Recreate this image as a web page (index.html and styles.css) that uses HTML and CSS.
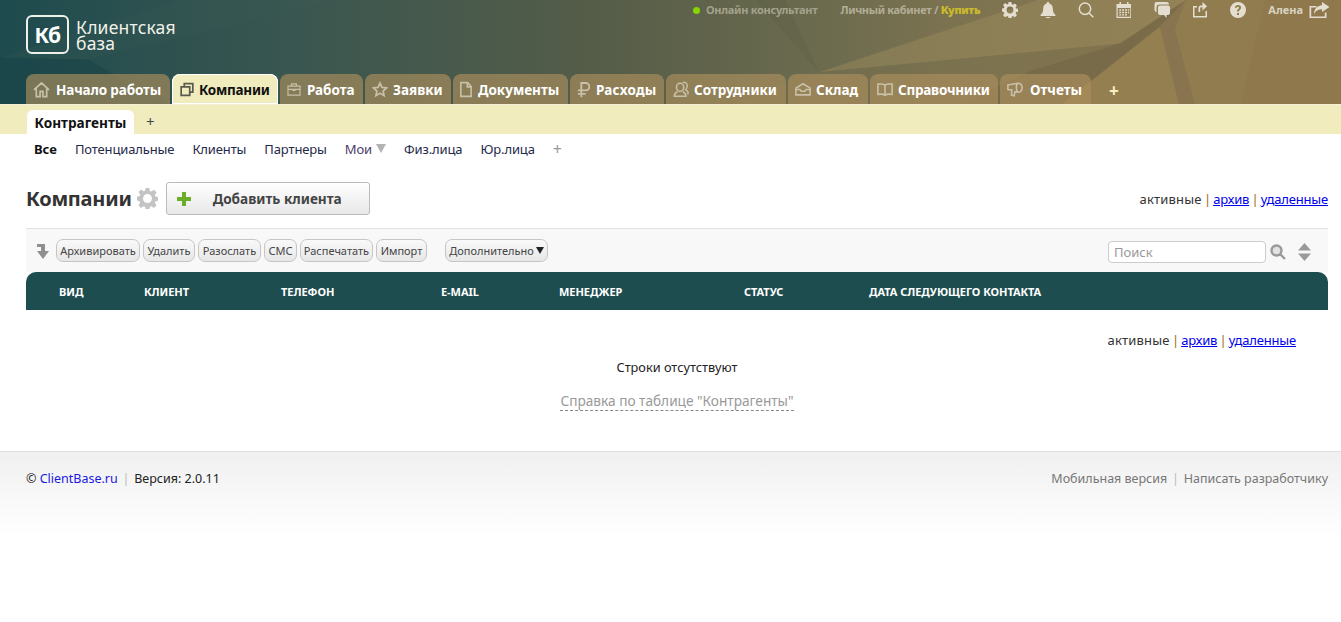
FILE: index.html
```html
<!DOCTYPE html>
<html lang="ru">
<head>
<meta charset="utf-8">
<title>Клиентская база</title>
<link rel="stylesheet" href="styles.css">
</head>
<body>
<svg class="sprite" width="0" height="0">
  <symbol id="i-gear" viewBox="0 0 16 16"><path fill-rule="evenodd" d="M6.600 0h2.800l.4 2.200 1.200.5 1.900-1.300 2 2-1.300 1.900.5 1.200 2.200.4v2.800l-2.200.4-.5 1.200 1.300 1.900-2 2-1.900-1.300-1.200.5-.4 2.200H6.600l-.4-2.200-1.200-.5-1.900 1.300-2-2 1.300-1.900-.5-1.200L-.3 9.400V6.600l2.200-.4.5-1.200-1.300-1.900 2-2L5 2.400l1.200-.5zM8 4.600a3.400 3.400 0 1 0 0 6.800 3.400 3.400 0 0 0 0-6.800z"/></symbol>
</svg>

<header class="top">
  <svg class="top-art" viewBox="0 0 1341 105" preserveAspectRatio="none" aria-hidden="true">
    <polygon points="0,58 88,60 135,88 170,105 0,105" fill="#184245" opacity=".5"/>
    <polygon points="88,60 340,0 180,0 0,58" fill="#3f6058" opacity=".18"/>
    <polygon points="756,0 819,73 785,0" fill="#4d4f3b" opacity=".14"/>
    <polygon points="819,73 1038,0 1186,0 1120,44" fill="#a3925f" opacity=".4"/>
    <polygon points="819,73 1120,44 930,105 730,105" fill="#7a6f50" opacity=".3"/>
    <polygon points="1186,0 1120,44 1030,72 960,105 1062,105 1160,27" fill="#6f6344" opacity=".55"/>
    <polygon points="1160,27 1179,105 1062,105" fill="#947f50"/>
    <polygon points="1186,0 1160,27 1179,105 1195,105 1175,30" fill="#887550"/>
    <polygon points="1186,0 1265,0 1241,105 1195,105 1175,30" fill="#917c50"/>
    <polygon points="1265,0 1341,0 1341,105 1241,105" fill="#8f794c"/>
  </svg>

  <div class="top-bar">
    <span class="online-dot"></span>
    <a class="top-link online">Онлайн консультант</a>
    <span class="top-link cabinet">Личный кабинет / <b class="buy">Купить</b></span>
    <div class="top-icons">
      <svg class="ti" viewBox="0 0 16 16"><use href="#i-gear"/></svg>
      <svg class="ti" viewBox="0 0 16 16"><path d="M8 0a1.300 1.300 0 0 1 1.300 1.500C11.600 2 12.800 4 12.800 6.500c0 3.500 1 4.700 2.700 6.500v1H.5v-1c1.700-1.800 2.700-3 2.700-6.500C3.200 4 4.400 2 6.700 1.500A1.300 1.300 0 0 1 8 0zM6 15h4a2 2 0 0 1-4 0z"/></svg>
      <svg class="ti" viewBox="0 0 16 16"><path fill="none" stroke="currentColor" stroke-width="1.500" d="M7 1a5.700 5.700 0 1 0 0 11.400A5.700 5.700 0 0 0 7 1zM11 11l4.300 4.300"/></svg>
      <svg class="ti" viewBox="0 0 16 16"><path fill-rule="evenodd" d="M3.500 0h1.500v2h6V0h1.500v2h2.500v14H.5V2h3zM1.700 6v8.800h12.600V6zM3.200 7.300h2v1.500h-2zm2.900 0h2v1.500h-2zm2.900 0h2v1.500H9zm2.900 0h1.200v1.500h-1.200zM3.200 9.800h2v1.500h-2zm2.900 0h2v1.500h-2zm2.900 0h2v1.500H9zm2.900 0h1.200v1.500h-1.200zM3.200 12.200h2v1.400h-2zm2.900 0h2v1.400h-2zm2.900 0h2v1.400H9z"/></svg>
      <svg class="ti" viewBox="0 0 16 16"><path d="M2.500 0h10A2.500 2.500 0 0 1 15 2.500h-9.500a3 3 0 0 0-3 3V10A2.200 2.200 0 0 1 .5 8V2a2 2 0 0 1 2-2zM6 3.500h8a2 2 0 0 1 2 2V11a2 2 0 0 1-2 2h-1.500v3L10 13H6a2 2 0 0 1-2-2V5.500a2 2 0 0 1 2-2z"/></svg>
      <svg class="ti" viewBox="0 0 16 16"><path d="M1 4h4v1.500H2.500v8.500h11V9H15v6.500H1zM6.500 10V6a2.500 2.500 0 0 1 2.500-2.500h1.500V0L15 4.200 10.500 8.400V5.200H9c-.5 0-.8.3-.8.8v4z"/></svg>
      <svg class="ti" viewBox="0 0 16 16"><path fill-rule="evenodd" d="M8 0a8 8 0 1 1 0 16A8 8 0 0 1 8 0zM7 11v2h2v-2zM8 3C6.200 3 5 4 4.900 5.800h2C7 5.100 7.300 4.800 8 4.800c.6 0 1 .3 1 .9 0 .5-.3.800-.9 1.300C7.300 7.600 7 8.200 7 9.500h2c0-.8.200-1.100.8-1.600.8-.6 1.300-1.200 1.300-2.300C11.100 4 9.800 3 8 3z"/></svg>
    </div>
    <span class="top-link user">Алена</span>
    <svg class="logout" viewBox="0 0 21 16"><path d="M.5 4h7v1.500H2.200v9h13.600v-4h1.700v5.500H.5zM13 0l7.500 5L13 10V7.200C9.500 7.200 6.800 8.500 5 12c0-5 3-8.300 8-8.800z"/></svg>
  </div>

  <div class="brand">
    <span class="brand-mark">Кб</span>
    <span class="brand-name">Клиентская<br>база</span>
  </div>

  <nav class="tabs">
    <a class="tab tab-start"><svg class="tab-i" viewBox="0 0 18 18"><path fill="none" stroke="currentColor" stroke-width="1.800" d="M1 9.500L9 2l8 7.500M3.500 8v8.500h4V11h3v5.500h4V8"/></svg>Начало работы</a>
    <a class="tab tab-active"><svg class="tab-i" viewBox="0 0 18 18"><path fill="none" stroke="currentColor" stroke-width="2.200" d="M5.500 4.500V1.500h11v11h-3.500M1.500 5.500h11v11h-11z"/></svg>Компании</a>
    <a class="tab tab-work"><svg class="tab-i" viewBox="0 0 18 18"><path fill="currentColor" fill-rule="evenodd" d="M6 1h6a1 1 0 0 1 1 1v2h4.500v13H.5V4H5V2a1 1 0 0 1 1-1zm.7 1.500V4h4.600V2.500zM2 5.500V8h14V5.500zM2 9.500V15.500h14V9.500h-5V11H7V9.500z"/></svg>Работа</a>
    <a class="tab tab-req"><svg class="tab-i" viewBox="0 0 18 18"><path fill="none" stroke="currentColor" stroke-width="1.900" d="M9 1.800l2.200 4.800 5.200.6-3.900 3.500 1.100 5.200L9 13.300l-4.600 2.600 1.100-5.200L1.600 7.200l5.200-.6z"/></svg>Заявки</a>
    <a class="tab tab-docs"><svg class="tab-i" viewBox="2 0 14 18"><path fill="none" stroke="currentColor" stroke-width="1.900" d="M3 1h8l4 4.500V17H3zM10.500 1v5H15"/></svg>Документы</a>
    <a class="tab tab-cost"><svg class="tab-i" viewBox="1 0 15 18"><path fill="none" stroke="currentColor" stroke-width="2.200" d="M6 18V1.500h5a4 4 0 0 1 0 8.500H2M2 14H11"/></svg>Расходы</a>
    <a class="tab tab-staff"><svg class="tab-i" viewBox="0 0 18 18"><path fill="none" stroke="currentColor" stroke-width="1.700" d="M8 2a4 4 0 0 1 4 4v1a4 4 0 0 1-8 0V6a4 4 0 0 1 4-4zM5 11.500C2.500 12.500 1.500 14 1.500 16.500h13c0-2.500-1-4-3.500-5M11 1.300a3.500 3.500 0 0 1 5 3.200c0 2-.5 3.500-1.800 4.500l2.600 2.500v3"/></svg>Сотрудники</a>
    <a class="tab tab-stock"><svg class="tab-i" viewBox="0 0 18 18"><path fill="none" stroke="currentColor" stroke-width="1.800" d="M1 7.500L9 2.500l8 5V15H1zM1 9h4.500l1.500 2h4l1.500-2H17"/></svg>Склад</a>
    <a class="tab tab-refs"><svg class="tab-i" viewBox="0 0 18 18"><path fill="none" stroke="currentColor" stroke-width="1.800" d="M9 4C7.500 2.800 4.500 2.500 1 3v11.500c3.500-.5 6.500-.2 8 1 1.500-1.200 4.500-1.500 8-1V3c-3.500-.5-6.500-.2-8 1zM9 4v11"/></svg>Справочники</a>
    <a class="tab tab-reports"><svg class="tab-i" viewBox="0 0 18 18"><path fill="none" stroke="currentColor" stroke-width="1.800" d="M1 4l11-2c3-.5 5 2 5 5s-2 5.500-5 5l-3-.5L8 16l-3-.6.5-5.900L1 9zM12 2c-2 2.500-2 7.500 0 10"/></svg>Отчеты</a>
    <span class="tab-add">+</span>
  </nav>
</header>

<div class="sub-band">
  <a class="sub-tab">Контрагенты</a>
  <span class="sub-add">+</span>
</div>

<nav class="filters">
  <a class="filter filter-on">Все</a>
  <a class="filter">Потенциальные</a>
  <a class="filter">Клиенты</a>
  <a class="filter">Партнеры</a>
  <a class="filter filter-my">Мои<i class="tri"></i></a>
  <a class="filter">Физ.лица</a>
  <a class="filter">Юр.лица</a>
  <span class="filter-add">+</span>
</nav>

<main class="main">
  <div class="title-row">
    <h1 class="title">Компании</h1>
    <svg class="title-gear" viewBox="0 0 16 16"><use href="#i-gear"/></svg>
    <button class="add-btn"><span class="add-plus"></span>Добавить клиента</button>
    <div class="states"><span>активные</span> <i>|</i> <a href="#">архив</a> <i>|</i> <a href="#">удаленные</a></div>
  </div>

  <div class="toolbar">
    <svg class="down-arrow" viewBox="0 0 12 15"><path d="M0 0h8v7h4l-6 8-6-8h4V3H0z"/></svg>
    <button class="tb tb-a">Архивировать</button>
    <button class="tb tb-b">Удалить</button>
    <button class="tb tb-c">Разослать</button>
    <button class="tb tb-d">СМС</button>
    <button class="tb tb-e">Распечатать</button>
    <button class="tb tb-f">Импорт</button>
    <button class="tb tb-more">Дополнительно<i class="tb-tri"></i></button>
    <input class="search" placeholder="Поиск">
    <svg class="search-i" viewBox="0 0 16 16"><path fill="#e2e2e2" stroke="#999" stroke-width="2.400" d="M6.500 1.500a5 5 0 1 0 0 10 5 5 0 0 0 0-10zM10 10l5 5"/></svg>
    <svg class="sort-i" viewBox="0 0 13 18"><path fill="#999" d="M6.500 0L13 7.500H0zM0 10.500h13L6.500 18z"/></svg>
  </div>

  <div class="thead">
    <span>ВИД</span><span>КЛИЕНТ</span><span>ТЕЛЕФОН</span><span>E-MAIL</span><span>МЕНЕДЖЕР</span><span>СТАТУС</span><span>ДАТА СЛЕДУЮЩЕГО КОНТАКТА</span>
  </div>

  <div class="states states-low"><span>активные</span> <i>|</i> <a href="#">архив</a> <i>|</i> <a href="#">удаленные</a></div>
  <p class="empty">Строки отсутствуют</p>
  <p class="help-row"><a class="help">Справка по таблице "Контрагенты"</a></p>
</main>

<footer class="foot">
  <div class="foot-left">© <a class="foot-brand">ClientBase.ru</a> <i>|</i> Версия: 2.0.11</div>
  <div class="foot-right"><a>Мобильная версия</a> <i>|</i> <a>Написать разработчику</a></div>
</footer>
</body>
</html>
```
FILE: styles.css
```css
* { box-sizing: border-box; }
html, body { margin: 0; padding: 0; background: #fff; }
body { font-family: "Noto Sans", "Open Sans", sans-serif; font-size: 13px; color: #222; overflow-x: hidden; }
.sprite { position: absolute; }
a { text-decoration: none; }

/* header */
.top { position: relative; height: 105px; border-bottom: 1px solid #f4f0d8; background: linear-gradient(90deg, #1e4b4e 0%, #3a5650 22%, #565d48 45%, #6a6a4e 60%, #7d7350 72%, #927c50 100%); overflow: hidden; }
.top-art { position: absolute; inset: 0; width: 100%; height: 100%; }
.top-bar { position: absolute; top: 0; right: 11px; height: 20px; display: flex; align-items: center; font-size: 11px; font-weight: 700; color: #b8b29b; }
.online-dot { width: 7px; height: 7px; border-radius: 50%; background: #86d400; margin-right: 6px; }
.top-link { white-space: nowrap; padding-bottom: 2px; }
.online { color: #a3a28c; margin-right: 23px; letter-spacing: -.27px; }
.cabinet { color: #b2ae96; margin-right: 22px; letter-spacing: -.35px; }
.buy { color: #c9b92d; }
.top-icons { display: flex; gap: 22px; color: #e4ded0; margin-right: 22px; }
.ti { width: 16px; height: 16px; fill: currentColor; display: block; }
.user { color: #d9d3c2; margin-right: 6px; }
.logout { width: 21px; height: 16px; fill: #e4ded0; }

.brand { position: absolute; left: 26px; top: 15px; display: flex; align-items: center; color: #fff; }
.brand-mark { width: 43px; height: 39px; border: 2px solid #eef0ea; border-radius: 6px; font-size: 21px; font-weight: 700; display: flex; align-items: center; justify-content: center; letter-spacing: -.5px; }
.brand-name { margin-left: 7px; font-size: 17.500px; line-height: 16px; color: #f2f2ea; letter-spacing: .2px; }

.tabs { position: absolute; left: 26px; bottom: 0; display: flex; gap: 2px; height: 30px; }
.tab { display: flex; align-items: center; height: 30px; padding: 1px 0 0 7px; border-radius: 8px 8px 0 0; background: rgba(172, 142, 92, .66); color: #fff; font-size: 13.500px; font-weight: 700; white-space: nowrap; }
.tab-i { width: 16px; height: 17px; margin-right: 5px; color: #c8c0a8; flex: none; }
.tab-start { width: 144px; letter-spacing: -.15px; }
.tab-start .tab-i { width: 17px; margin-right: 6px; }
.tab-active { width: 106px; padding-left: 8px; background: #f1ecbd; color: #111; box-shadow: inset 0 0 0 1px #fff; letter-spacing: -.25px; }
.tab-active .tab-i { width: 14px; margin-right: 5px; color: #5a5a4e; }
.tab-work { width: 83px; }
.tab-work .tab-i { width: 14px; margin-right: 6px; }
.tab-req { width: 86px; }
.tab-docs { width: 115px; }
.tab-docs .tab-i { width: 12px; margin-right: 6px; }
.tab-cost { width: 94px; letter-spacing: .2px; }
.tab-cost .tab-i { width: 13px; margin-right: 6px; }
.tab-staff { width: 120px; }
.tab-stock { width: 80px; }
.tab-refs { width: 128px; letter-spacing: -.25px; }
.tab-reports { width: 91px; }
.tab-reports .tab-i { margin-right: 7px; }
.tab-add { color: #f6f0bd; font-size: 17px; font-weight: 700; margin-left: 16px; align-self: center; padding-top: 3px; }

/* sub tabs */
.sub-band { height: 29px; background: #f1ecbd; display: flex; align-items: flex-end; padding-left: 27px; }
.sub-tab { height: 24px; width: 107px; background: #fff; border-radius: 6px 6px 0 0; font-weight: 700; font-size: 13.600px; color: #111; display: flex; align-items: center; justify-content: center; }
.sub-add { margin-left: 12px; height: 23px; font-size: 15px; color: #3a4a55; }

/* filters */
.filters { height: 31px; padding: 0 0 2px 34px; display: flex; align-items: center; gap: 18px; color: #1f2a4a; }
.filter { white-space: nowrap; letter-spacing: -.13px; }
.filter-on { font-weight: 700; color: #111; letter-spacing: 0; }
.filter-my { color: #4a3a6a; display: flex; align-items: center; }
.tri { width: 0; height: 0; border: 5.500px solid transparent; border-top: 9px solid #b3b3b3; border-bottom: 0; margin-left: 4px; }
.filter-add { color: #999; font-size: 16px; }

/* content */
.main { padding: 0 13px 0 26px; }
.title-row { height: 63px; padding-top: 17px; display: flex; align-items: flex-start; }
.title { margin: 0; font-size: 20px; line-height: 33px; font-weight: 700; color: #333; letter-spacing: -.25px; }
.title-gear { width: 21px; height: 21px; fill: #c4c4c4; margin: 6px 0 0 5px; }
.add-btn { margin-left: 8px; width: 204px; height: 33px; border: 1px solid #bbb; border-radius: 3px; background: linear-gradient(#fff, #e8e8e8); font: 700 13.600px "Noto Sans", sans-serif; color: #444; display: flex; align-items: center; padding: 0 0 0 10px; }
.add-plus { width: 14px; height: 14px; margin-right: 22px; background: linear-gradient(#6cae2a, #6cae2a) center/14px 4px no-repeat, linear-gradient(#6cae2a, #6cae2a) center/4px 14px no-repeat; }
.states { margin-left: auto; padding-top: 1px; font-size: 13px; letter-spacing: -.17px; line-height: 33px; color: #333; white-space: nowrap; }
.states span { letter-spacing: .2px; }
.states i { font-style: normal; color: #a06a20; margin: 0 -1px; }
.states a { color: #00e; text-decoration: underline; }

.toolbar { height: 44px; background: #f8f8f8; border-top: 1px solid #e2e2e2; display: flex; align-items: center; padding: 0 17px 0 11px; }
.down-arrow { width: 12px; height: 15px; fill: #8f8f8f; margin: 2px 7px 0 0; flex: none; }
.tb { height: 23px; padding: 0 0 1px; margin-right: 3px; border: 1px solid #c6c6c6; border-radius: 7px; background: linear-gradient(#f9f9f9, #e7e7e7); font: 11px "Noto Sans", sans-serif; color: #444; white-space: nowrap; }
.tb-a { width: 84px; }
.tb-b { width: 52px; }
.tb-c { width: 63px; }
.tb-d { width: 33px; }
.tb-e { width: 73px; }
.tb-f { width: 51px; }
.tb-more { width: 103px; margin-left: 15px; display: flex; align-items: center; justify-content: center; color: #444; }
.tb-tri { width: 0; height: 0; border: 4px solid transparent; border-top: 7px solid #222; border-bottom: 0; margin-left: 2px; }
.search { margin: 2px 0 0 auto; width: 158px; height: 22px; border: 1px solid #ccc; border-radius: 4px; padding: 0 5px; font: 13px "Noto Sans", sans-serif; background: #fff; }
.search::placeholder { color: #999; opacity: 1; }
.search-i { width: 16px; height: 16px; margin: 2px 0 0 4px; flex: none; }
.sort-i { width: 13px; height: 18px; margin: 2px 0 0 12px; flex: none; }

.thead { height: 38px; background: #1e4d50; border-radius: 10px 10px 0 0; padding-left: 33px; display: grid; grid-template-columns: 85px 137px 160px 118px 185px 125px 1fr; align-items: center; color: #fff; font-size: 11px; font-weight: 700; letter-spacing: -.05px; }

.states-low { line-height: 20px; padding-top: 0; margin-top: 20px; text-align: right; padding-right: 32px; }
.empty { margin: 8px 0 0; font-size: 12.750px; line-height: 18px; text-align: center; color: #222; }
.help-row { margin: 16px 0 0; text-align: center; line-height: 18px; font-size: 13.650px; }
.help { color: #999; border-bottom: 1px dashed #888; }

.foot { margin-top: 41px; height: 85px; border-top: 1px solid #dedede; background: linear-gradient(#f0f0f0, #fff); padding: 18px 13px 0 26px; display: flex; justify-content: space-between; font-size: 12.500px; line-height: 18px; }
.foot i { font-style: normal; color: #bbb; margin: 0 1.500px; }
.foot-left { color: #222; }
.foot-brand { color: #1a1ae0; }
.foot-right { color: #777; }
```
